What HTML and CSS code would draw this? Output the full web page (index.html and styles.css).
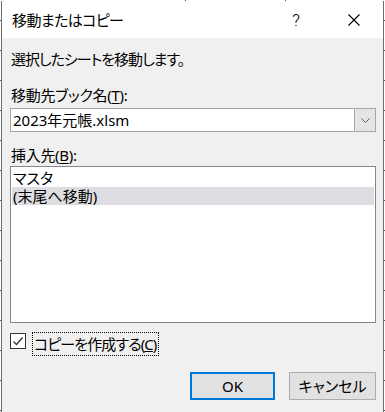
FILE: index.html
```html
<!DOCTYPE html>
<html lang="ja">
<head>
    <meta charset="UTF-8">
    <title>移動またはコピー</title>
    <link rel="stylesheet" href="styles.css">
</head>
<body>

<div class="dialog">
    <div class="titlebar">
        <span class="title">移動またはコピー</span>
        <span class="help">?</span>
        <span class="close">
            <svg width="12" height="12" viewBox="0 0 12 12">
                <path d="M0.5 0.5 L11.5 11.5 M11.5 0.5 L0.5 11.5" stroke="#000" stroke-width="1.1" fill="none"/>
            </svg>
        </span>
    </div>

    <div class="content">
        <p class="desc">選択したシートを移動します。</p>

        <div class="label">移動先ブック名(<u>T</u>):</div>
        <div class="combo">
            <span class="combo-value">2023年元帳.xlsm</span>
            <span class="combo-btn">
                <svg width="9" height="5" viewBox="0 0 9 5">
                    <path d="M0.5 0.5 L4.5 4.5 L8.5 0.5" stroke="#606060" stroke-width="1" fill="none"/>
                </svg>
            </span>
        </div>

        <div class="label label-insert">挿入先(<u>B</u>):</div>
        <ul class="listbox">
            <li>マスタ</li>
            <li class="selected">(末尾へ移動)</li>
        </ul>

        <div class="check-row">
            <span class="checkbox">
                <svg width="14" height="14" viewBox="0 0 14 14">
                    <path d="M2.5 7.5 L5.5 10.5 L11.5 3.5" stroke="#333" stroke-width="1.3" fill="none"/>
                </svg>
            </span>
            <span class="check-label">コピーを作成する(<u>C</u>)</span>
        </div>

        <div class="buttons">
            <button class="btn btn-default">OK</button>
            <button class="btn">キャンセル</button>
        </div>
    </div>
</div>

</body>
</html>
```

FILE: styles.css
```css
body {
    margin: 0;
    padding: 1px 0 0 1px;
    height: 412px;
    box-sizing: border-box;
    overflow: hidden;
    font-family: "Noto Sans", "Noto Sans CJK JP", sans-serif;
    font-size: 15px;
    font-feature-settings: "palt";
    color: #000;
    background-color: #fff;
    background-image:
        linear-gradient(to right, transparent 185px, #5a5a5a 185px, #5a5a5a 186px, transparent 186px, transparent 285px, #5a5a5a 285px, #5a5a5a 286px, transparent 286px),
        linear-gradient(#5a5a5a 0, #5a5a5a 1px, transparent 1px);
    background-size: 100% 1px, 100% 30px;
    background-position: 0 0, 0 20px;
    background-repeat: no-repeat, repeat-y;
}

.dialog {
    width: 383px;
    height: 411px;
    box-sizing: border-box;
    background: #f0f0f0;
    border-left: 1px solid #6e6e6e;
    border-right: 1px solid #6e6e6e;
}

.titlebar {
    display: flex;
    align-items: center;
    height: 37px;
    background: #fff;
    padding-left: 10px;
}

.title {
    flex: 1;
    letter-spacing: -0.6px;
}

.help {
    width: 58px;
    text-align: center;
    font-family: Roboto, "Noto Sans", sans-serif;
    font-weight: 300;
    font-size: 17px;
}

.close {
    width: 58px;
    display: flex;
    justify-content: center;
    align-items: center;
}

.content {
    padding: 0 7px 0 8px;
    line-height: 20px;
}

.desc {
    margin: 11px 0 0 1px;
    letter-spacing: -1px;
}

.label {
    margin: 16px 0 0 1px;
    letter-spacing: -0.3px;
}

.label-insert {
    margin-top: 13px;
}

.label u {
    text-underline-offset: 2px;
}

.combo {
    display: flex;
    height: 24px;
    margin-top: 3px;
    box-sizing: border-box;
    background: #fff;
    border: 1px solid #a6a6a6;
}

.combo-value {
    flex: 1;
    padding-left: 2px;
    line-height: 22px;
}

.combo-btn {
    width: 20px;
    display: flex;
    justify-content: center;
    align-items: center;
    background: #e5e5e5;
    border: 1px solid #a6a6a6;
    margin: -1px -1px -1px 0;
}

.listbox {
    list-style: none;
    margin: 1px 0 0;
    padding: 2px 1px;
    height: 157px;
    box-sizing: border-box;
    background: #fff;
    border: 1px solid #828790;
}

.listbox li {
    height: 18px;
    line-height: 18px;
    padding-left: 1px;
    overflow: hidden;
}

.listbox .selected {
    background: #dedee2;
}

.check-row {
    display: flex;
    align-items: flex-start;
    margin-top: 9px;
}

.checkbox {
    width: 16px;
    height: 16px;
    box-sizing: border-box;
    margin-top: 1px;
    border: 1px solid #333;
    background: #fff;
    display: flex;
    justify-content: center;
    align-items: center;
}

.check-label {
    margin-left: 6px;
    padding: 0 2px 0 1px;
    line-height: 22px;
    letter-spacing: -0.9px;
    border: 1px dotted #000;
}

.buttons {
    display: flex;
    justify-content: flex-end;
    gap: 14px;
    margin-top: 16px;
}

.btn {
    height: 28px;
    width: 87px;
    font: inherit;
    line-height: 20px;
    background: #e1e1e1;
    border: 1px solid #adadad;
    padding: 0;
    color: #000;
}

.btn-default {
    width: 85px;
    border: 2px solid #0078d7;
}
```
